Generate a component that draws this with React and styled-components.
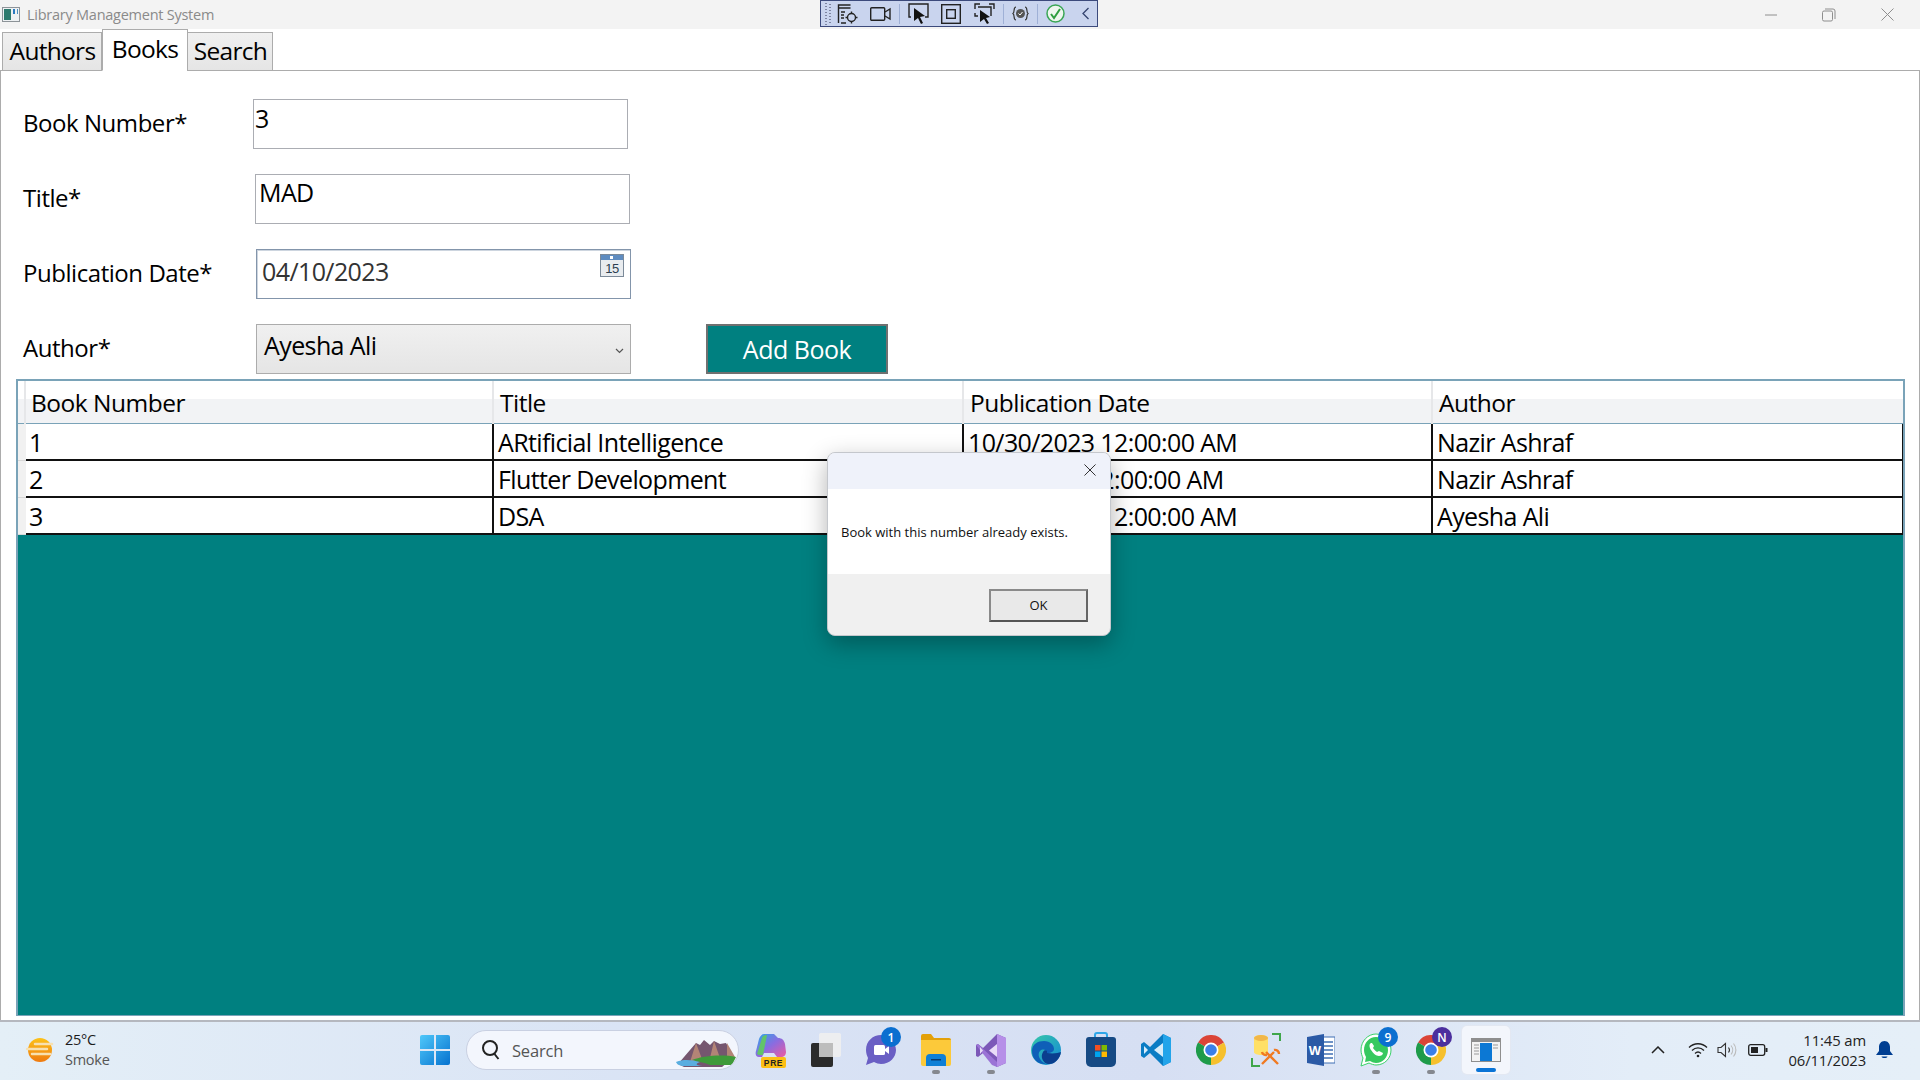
import React from "react";
import styled, { createGlobalStyle } from "styled-components";

const Global = createGlobalStyle`
  html, body { margin: 0; padding: 0; background: #fff; }
  * { box-sizing: border-box; }
  body { font-family: "Open Sans", "Noto Sans", sans-serif; color: #000; }
`;

const Page = styled.div`
  position: relative; width: 1920px; height: 1080px; overflow: hidden;
  display: flex; flex-direction: column;
`;
const TitleBar = styled.div`
  height: 29px; flex: none; background: #f3f3f3; display: flex; align-items: center; padding-left: 2px;
`;
const AppTitle = styled.span`
  margin-left: 7px; font-size: 14.5px; letter-spacing: -0.25px; color: #8a8a8a; white-space: nowrap;
`;
const WindowControls = styled.div`
  margin-left: auto; display: flex; align-items: center; height: 29px; padding-right: 3px;
`;
const WinBtn = styled.div`
  width: 58.5px; height: 29px; display: flex; align-items: center; justify-content: center;
`;
const DebugBar = styled.div`
  position: absolute; left: 820px; top: 0; width: 278px; height: 27px;
  background: #c9d4ee; border: 1px solid #3c4a7c;
  display: flex; align-items: center;
`;
const TabStrip = styled.div`
  height: 42px; flex: none; display: flex; align-items: flex-end; padding-left: 3px; position: relative; z-index: 1; margin-bottom: -1px;
`;
const Tab = styled.div`
  width: ${p => p.$w}px; height: ${p => (p.$active ? 42 : 39)}px;
  border: 1px solid #acacac; ${p => (p.$active ? "border-bottom-color:#fff;" : "")}
  margin-left: ${p => (p.$active ? 0 : -1)}px;
  background: ${p => (p.$active ? "#fff" : "linear-gradient(#f0f0f0,#e5e5e5)")};
  font-size: 24.5px; letter-spacing: -0.7px; line-height: ${p => (p.$active ? 31 : 30)}px; padding-top: 3px;
  padding-left: ${p => (p.$active ? 0 : 1)}px;
  text-align: center; white-space: nowrap;
`;
const Panel = styled.div`
  flex: 1; border-top: 1px solid #acacac; border-left: 1px solid #acacac; border-right: 1px solid #acacac;
  padding-top: 28px; display: flex; flex-direction: column; min-height: 0;
  background: #fff;
`;
const Form = styled.div`
  display: flex; flex-direction: column; gap: 25px; padding-left: 22px;
`;
const Row = styled.div`
  display: flex; align-items: center; height: 50px;
`;
const Label = styled.div`
  width: ${p => p.$w}px; flex: none; font-size: 24px; letter-spacing: -0.45px; white-space: nowrap; padding-bottom: 3px;
`;
const Field = styled.div`
  width: 375px; height: 50px; border: 1px solid ${p => p.$border || "#abadb3"};
  padding: ${p => p.$top || 0}px ${p => p.$pad}px 0; font-size: 25px; letter-spacing: -0.6px; line-height: 34px;
  background: ${p => p.$bg || "#fff"}; color: ${p => p.$color || "#000"};
  display: flex; justify-content: space-between; white-space: nowrap;
  ${p => (p.$thick ? "box-shadow: inset 1px 1px 0 #cdd5df;" : "")}
`;
const Chevron = styled.span`
  align-self: center; margin: 0 -1px 0 0; display: flex;
`;
const AddButton = styled.div`
  width: 182px; height: 50px; margin-left: 75px; background: #008080; border: 2px solid #707070; color: #fff;
  font-size: 25px; letter-spacing: -0.5px; display: flex; align-items: center; justify-content: center;
`;
const Table = styled.div`
  margin: 5px 14px 4px 15px; flex: 1; border: 2px solid #7aa3b8; border-bottom: 1px solid #7aa3b8; border-right-width: 2px;
  background: #008080; display: flex; flex-direction: column; min-height: 0;
`;
const HeaderRow = styled.div`
  height: 43px; flex: none; display: grid; grid-template-columns: 8px 468px 470px 469px 1fr;
  background: linear-gradient(#fff 0, #fff 18px, #f2f3f5 18px, #f2f3f5 100%);
  border-bottom: 1px solid #7aa3b8;
`;
const HeaderCell = styled.div`
  font-size: 24.5px; letter-spacing: -0.5px; padding-left: ${p => p.$pad}px; line-height: 43px; white-space: nowrap;
  border-right: 2px solid #e6e7e9;
  &:last-child { border-right: 0; }
`;
const BodyRow = styled.div`
  height: 37px; flex: none; display: grid; grid-template-columns: 8px 468px 470px 469px 1fr;
`;
const Gutter = styled.div`
  background: #f1f1f1; border-bottom: 1px solid #d8d8d8;
`;
const Cell = styled.div`
  background: #fff; border-right: 2px solid #111; border-bottom: 2px solid #111;
  font-size: 25px; letter-spacing: -0.62px; padding-left: ${p => p.$pad}px; line-height: 37px; white-space: nowrap; overflow: hidden;
  &:last-child { border-right: 1px solid #111; }
`;
const Dialog = styled.div`
  position: absolute; left: 827px; top: 452px; width: 284px; height: 184px; border-radius: 8px; overflow: hidden;
  background: #f0f0f0; border: 1px solid #c4c7cc; box-shadow: 0 8px 24px rgba(0,0,0,.3);
  display: flex; flex-direction: column;
`;
const DialogHead = styled.div`
  height: 36px; flex: none; background: #eff2fa; display: flex; justify-content: flex-end; align-items: center; padding: 0 14px 2px 0;
`;
const DialogBody = styled.div`
  height: 85px; flex: none; background: #fff; font-size: 13px; display: flex; align-items: center; padding: 1px 0 0 13px; color: #111; white-space: nowrap;
`;
const DialogFoot = styled.div`
  flex: 1; display: flex; justify-content: flex-end; align-items: flex-start; padding: 15px 22px 0 0;
`;
const OkButton = styled.div`
  width: 99px; height: 33px; background: #e9e9e9; border: 2px solid #8a8a8a; border-bottom-color: #555; border-right-color: #666;
  font-size: 13px; padding-bottom: 2px; display: flex; align-items: center; justify-content: center; color: #111;
`;
const TaskBar = styled.div`
  height: 60px; flex: none; border-top: 2px solid #b5b8bf; padding-bottom: 2px; display: flex; align-items: center;
  background: linear-gradient(90deg, #e4eff7 0%, #d9e3f5 35%, #d6dff3 60%, #e3edf8 85%, #e5eff8 100%);
  position: relative;
`;
const Weather = styled.div`
  width: 407px; flex: none; display: flex; align-items: center; padding-left: 26px; gap: 11px;
`;
const WeatherText = styled.div`
  font-size: 14.5px; letter-spacing: -0.25px; line-height: 20px; color: #1b1b1b;
  & > div + div { color: #555; }
`;
const Slot = styled.div`
  position: relative; width: ${p => p.$w || 55}px; height: 56px; flex: none; display: flex; align-items: center; justify-content: center;
  ${p => p.$running ? `&::after { content:""; position:absolute; left:50%; margin-left:-4px; bottom:4px; width:8px; height:4px; border-radius:2px; background:#85888f; }` : ""}
`;
const Active = styled.div`
  position: relative; width: 48px; height: 48px; background: #f3f6fc; border-radius: 5px; display: flex; align-items: center; justify-content: center;
  box-shadow: 0 0 0 1px #e3e8f2;
  &::after { content:""; position:absolute; left:14px; bottom:2px; width:20px; height:4px; border-radius:2px; background:#0a74d6; }
`;
const SearchPill = styled.div`
  width: 273px; height: 40px; margin: 0 4px 0 4px; flex: none; border-radius: 20px; background: #f3f6fd; border: 1px solid #c9d0e2;
  display: flex; align-items: center; padding-left: 14px; gap: 11px; font-size: 16.5px; color: #555; position: relative; overflow: hidden;
  letter-spacing: -0.2px;
`;
const Scene = styled.span`
  position: absolute; right: 0; bottom: 2px; display: flex;
`;
const Badge = styled.div`
  position: absolute; right: ${p => p.$r}px; top: ${p => p.$t}px; width: 20px; height: 20px; border-radius: 50%;
  background: ${p => p.$bg}; color: #fff; font-size: 12px; font-weight: 600; display: flex; align-items: center; justify-content: center;
`;
const Tray = styled.div`
  margin-left: auto; display: flex; align-items: center; height: 56px; padding-right: 27px;
`;
const TrayIcon = styled.div`
  width: ${p => p.$w}px; margin-left: ${p => p.$ml || 0}px; display: flex; justify-content: center; flex: none;
`;
const Clock = styled.div`
  width: 88px; text-align: right; font-size: 14.8px; line-height: 20px; color: #222; margin-left: 3px; margin-right: 10px;
  letter-spacing: -0.1px; white-space: nowrap;
`;
const Sep = styled.span`
  width: 1px; height: 20px; background: #9fb0d6; flex: none; margin: 0 ${p => p.$m || 0}px;
`;
const BarIcon = styled.span`
  display: flex; flex: none; margin-left: ${p => p.$ml || 0}px;
`;

/* icons */
const AppGlyph = () => (
  <svg width="18" height="15" viewBox="0 0 18 15"><rect x=".5" y=".5" width="17" height="14" fill="#eef1f3" stroke="#8d9398"/><rect x="2" y="2" width="7" height="11" fill="#2e7b6e"/><rect x="11" y="2" width="2" height="5" fill="#2a7ac0"/><rect x="15" y="2" width="1" height="5" fill="#4a90c0"/></svg>
);
const Min = () => <svg width="14" height="14"><path d="M1 7h12" stroke="#8e8e8e"/></svg>;
const Restore = () => <svg width="14" height="14" fill="none" stroke="#8e8e8e"><rect x=".5" y="3" width="10" height="10" rx="1.5"/><path d="M3 1h8a2 2 0 0 1 2 2v8"/></svg>;
const CloseX = ({ c = "#8e8e8e", s = 13 }) => <svg width={s} height={s} viewBox="0 0 13 13"><path d="M.5.5l12 12M12.5.5l-12 12" stroke={c} fill="none"/></svg>;
const Calendar = () => (
  <svg width="24" height="23" viewBox="0 0 24 23" style={{ marginTop: 0, marginRight: 1 }}>
    <rect x=".5" y=".5" width="23" height="22" fill="#e9ecef" stroke="#7c8a99"/><rect x="1" y="1" width="22" height="5" fill="#5f8cc0"/><rect x="10" y="2" width="3" height="3" fill="#fff"/>
    <text x="12" y="19" textAnchor="middle" fontSize="13" fontFamily="Liberation Sans" fill="#2c3e50">15</text>
  </svg>
);
const Grip = () => <svg width="8" height="23" style={{ marginLeft: 3 }}>{[...Array(8)].map((_, i) => <g key={i}><rect x="1" y={1 + i * 3} width="2" height="1" fill="#7d84a0"/><rect x="5" y={2 + i * 3} width="2" height="1" fill="#7d84a0"/></g>)}</svg>;
const TbConfig = () => <svg width="22" height="22" viewBox="0 0 22 22" fill="none" stroke="#222" strokeWidth="1.4"><path d="M1.5 20V2h12M1.5 5h12" /><path d="M4 9h4M4 12h3M4 15h3M4 20h5"/><circle cx="14.5" cy="14.5" r="4"/><path d="M14.5 8.5v2M14.5 18.5v2M8.5 14.5h2M18.5 14.5h2"/></svg>;
const TbCam = () => <svg width="21" height="14" viewBox="0 0 21 14" fill="none" stroke="#222" strokeWidth="1.4"><rect x=".7" y=".7" width="14" height="12.6" rx="1"/><path d="M15 5l5-3v10l-5-3"/></svg>;
const TbSelect = () => <svg width="21" height="21" viewBox="0 0 21 21"><path d="M3 14H1V1h19v13h-3" fill="none" stroke="#222" strokeWidth="1.4"/><path d="M6 5l11 8-5 1 3 6-2 1-3-6-4 3z" fill="#111"/></svg>;
const TbFrame = () => <svg width="20" height="20" viewBox="0 0 20 20" fill="none" stroke="#222" strokeWidth="1.4"><rect x=".7" y=".7" width="18.6" height="18.6"/><rect x="5.7" y="5.7" width="8.6" height="8.6"/></svg>;
const TbDisplay = () => <svg width="21" height="21" viewBox="0 0 21 21"><path d="M1 6V1h5M15 1h5v5M1 10v3h3M4 4h13v9" fill="none" stroke="#222" strokeWidth="1.4"/><path d="M6 7l10 7-4 1 3 5-2 1-3-5-4 3z" fill="#111"/></svg>;
const TbBind = () => <svg width="17" height="15" viewBox="0 0 17 15"><path d="M4 1C1 1 3 6 1 7.500 3 9 1 14 4 14M13 1c3 0 1 5 3 6.500-2 1.500 0 6.500-3 6.500" fill="none" stroke="#333" strokeWidth="1.2"/><circle cx="8.500" cy="7.500" r="4.500" fill="#555"/><path d="M6.500 7.500l1.500 1.500 2.500-3" stroke="#fff" fill="none"/></svg>;
const TbCheck = () => <svg width="19" height="19" viewBox="0 0 19 19"><circle cx="9.500" cy="9.500" r="8.500" fill="#eef6ee" stroke="#3aa655" strokeWidth="1.500"/><path d="M5 10l3 4 6-9" stroke="#2f9e3f" strokeWidth="2" fill="none"/></svg>;
const TbBack = () => <svg width="9" height="13" viewBox="0 0 9 13"><path d="M7.500 1L2 6.500 7.500 12" stroke="#34446f" strokeWidth="1.300" fill="none"/></svg>;
const SelectChevron = () => <svg width="9" height="6" viewBox="0 0 9 6"><path d="M1 1l3.500 3.500L8 1" stroke="#555" strokeWidth="1.200" fill="none"/></svg>;

const Sun = () => (
  <svg width="28" height="26" viewBox="0 0 28 26">
    <defs><linearGradient id="sn" x1="0" y1="0" x2="0" y2="1"><stop offset="0" stopColor="#fcc21a"/><stop offset="1" stopColor="#ef7a10"/></linearGradient></defs>
    <circle cx="14" cy="13" r="12" fill="url(#sn)"/>
    <path d="M9 7h17M1 12h20M6 17h18" stroke="#f7e0b0" strokeWidth="2.500" strokeLinecap="round"/>
  </svg>
);
const StartIcon = () => (
  <svg width="30" height="30" viewBox="0 0 30 30">
    <defs><linearGradient id="ws" x1="0" y1="0" x2="1" y2="1"><stop offset="0" stopColor="#4fc8fa"/><stop offset="1" stopColor="#0672cf"/></linearGradient></defs>
    <path d="M0 2a2 2 0 0 1 2-2h12v14H0zM16 0h12a2 2 0 0 1 2 2v12H16zM0 16h14v14H2a2 2 0 0 1-2-2zM16 16h14v12a2 2 0 0 1-2 2H16z" fill="url(#ws)"/>
  </svg>
);
const Mag = () => <svg width="20" height="22" viewBox="0 0 20 22" fill="none" stroke="#222" strokeWidth="2"><circle cx="9" cy="9" r="7"/><path d="M13.500 15l4 5"/></svg>;
const Landscape = () => (
  <svg width="64" height="29" viewBox="0 0 64 29">
    <path d="M4 26L22 5l4 2 4-5 6 5 4-4 6 3 6-1 8 14-12 10H10z" fill="#75566f"/>
    <path d="M22 5l6 16-12 3zM40 3l6 17h-10zM53 5l8 14-8 1z" fill="#b38476"/>
    <path d="M18 22c10-4 30-6 44-3l-4 8H36c-6-3-12-3-18-5z" fill="#3f9a3a"/>
    <path d="M2 24c8-3 16-2 24 0-6 2-4 4 6 4H8c-4-1-5-2-6-4z" fill="#5aaee0"/>
  </svg>
);
const Copilot = () => (
  <svg width="32" height="36" viewBox="0 0 32 36">
    <defs><linearGradient id="cp" x1="0" y1="0" x2="1" y2="1"><stop offset="0" stopColor="#2aa8e8"/><stop offset=".5" stopColor="#8a6ce0"/><stop offset="1" stopColor="#ee5aa0"/></linearGradient></defs>
    <path d="M9 2h10l4 4c4 0 6 2 7 6l1 8c0 3-2 5-5 5h-4l-3-4H9l-2 4H4c-3 0-4-3-3-6l3-12C5 4 7 2 9 2z" fill="url(#cp)"/>
    <path d="M2 22L7 6c1-3 4-3 5-3l-4 20H4z" fill="#62c46a"/>
    <rect x="6" y="25" width="25" height="11" rx="2" fill="#fcbf14"/>
    <text x="18.500" y="34" textAnchor="middle" fontSize="8.500" fontWeight="700" fontFamily="Liberation Sans" fill="#222" letterSpacing=".6">PRE</text>
  </svg>
);
const TaskView = () => (
  <svg width="30" height="34" viewBox="0 0 30 34">
    <rect x="0" y="10" width="22" height="24" rx="2" fill="#2b2b2b"/>
    <rect x="8" y="0" width="22" height="24" rx="2" fill="#f0f0f0" opacity=".9"/>
    <rect x="8" y="10" width="14" height="14" fill="#bdbdbd"/>
  </svg>
);
const Teams = () => (
  <svg width="32" height="32" viewBox="0 0 32 32">
    <path d="M16 1C8 1 1 7 1 16c0 3 1 6 2 8l-2 7 8-3c2 1 5 2 7 2 9 0 15-7 15-14S24 1 16 1z" fill="#6a5fc4"/>
    <rect x="9" y="11" width="11" height="10" rx="1.500" fill="#fff"/><path d="M20 15l4-3v8l-4-3z" fill="#fff"/>
  </svg>
);
const Folder = () => (
  <svg width="30" height="32" viewBox="0 0 30 32">
    <path d="M0 2a2 2 0 0 1 2-2h8l3 4h15a2 2 0 0 1 2 2v6H0z" fill="#e3a008"/>
    <path d="M0 6h30v24a2 2 0 0 1-2 2H2a2 2 0 0 1-2-2z" fill="#fcc93a"/>
    <path d="M5 24a4 4 0 0 1 4-4h12a4 4 0 0 1 4 4v8H5z" fill="#0f7fd6"/><rect x="10" y="25" width="10" height="1.500" fill="#083a70"/>
  </svg>
);
const VS = () => (
  <svg width="30" height="33" viewBox="0 0 30 33">
    <path d="M21 0l9 4v25l-9 4L7 19 2 23l-2-1V11l2-1 5 4z" fill="#7c58b8"/>
    <path d="M21 0l9 4v25l-9 4z" fill="#b68fe8"/>
    <path d="M0 11l2-1 19 18v5l-5-2z" fill="#9b74d6"/>
    <path d="M4 13v7l3-3.500z M21 10l-8 6.500 8 6.500z" fill="#e9dcf7"/>
  </svg>
);
const Edge = () => (
  <svg width="30" height="30" viewBox="0 0 30 30">
    <defs><linearGradient id="eg" x1="0" y1="0" x2="1" y2="1"><stop offset="0" stopColor="#36c8a8"/><stop offset="1" stopColor="#1488d8"/></linearGradient></defs>
    <circle cx="15" cy="15" r="15" fill="url(#eg)"/>
    <path d="M1 16C1 9 7 6 13 6c6 0 10 4 10 8 0 2-2 4-7 4 0-3-4-5-7-2-3 3-1 10 6 13-8 1-14-5-14-13z" fill="#0f5fb8"/>
    <path d="M16 18c7 1 11 0 14-1-1 7-7 13-13 12-5-1-8-7-5-12 1-2 3-2 4-1z" fill="#0b3f8e"/>
  </svg>
);
const Store = () => (
  <svg width="30" height="36" viewBox="0 0 30 36">
    <path d="M9 6V3a2 2 0 0 1 2-2h8a2 2 0 0 1 2 2v3" fill="none" stroke="#2ea6e8" strokeWidth="2"/>
    <path d="M0 8a3 3 0 0 1 3-3h24a3 3 0 0 1 3 3v22a5 5 0 0 1-5 5H5a5 5 0 0 1-5-5z" fill="#164a84"/>
    <rect x="9" y="13" width="5.500" height="5.500" fill="#f25022"/><rect x="15.500" y="13" width="5.500" height="5.500" fill="#7fba00"/>
    <rect x="9" y="19.500" width="5.500" height="5.500" fill="#00a4ef"/><rect x="15.500" y="19.500" width="5.500" height="5.500" fill="#ffb900"/>
  </svg>
);
const VSCode = () => (
  <svg width="32" height="32" viewBox="0 0 32 32">
    <path d="M23 0l8 4v24l-8 4-13-13-6 5-3-2V10l3-2 6 5z" fill="#0a7cc4"/>
    <path d="M23 0l8 4v24l-8 4z" fill="#22a4ea"/>
    <path d="M23 9l-9 7 9 7z" fill="#d7ecfa"/>
    <path d="M4 12v8l4-4z" fill="#d7ecfa"/>
  </svg>
);
const Chrome = ({ s = 30 }) => (
  <svg width={s} height={s} viewBox="0 0 30 30">
    <path d="M15 15L2 7.500A15 15 0 0 1 28 7.500z" fill="#db4437"/>
    <path d="M15 15L28 7.500A15 15 0 0 1 15 30z" fill="#f6c02d"/>
    <path d="M15 15L15 30A15 15 0 0 1 2 7.500z" fill="#1e9b4a"/>
    <circle cx="15" cy="15" r="7.500" fill="#fff"/><circle cx="15" cy="15" r="5.800" fill="#3b7fe8"/>
  </svg>
);
const DbTool = () => (
  <svg width="30" height="34" viewBox="0 0 30 34">
    <path d="M21 1h8v7M1 25v8h8" fill="none" stroke="#3fa64a" strokeWidth="2"/>
    <path d="M3 5c0-4 14-4 14 0v14c0 4-14 4-14 0z" fill="#ffe066"/><ellipse cx="10" cy="5" rx="7" ry="3" fill="#f1b74a"/>
    <path d="M11 31l12-12M27 31L15 19M11 19a4 4 0 0 0 5 3M23 17a4 4 0 0 1 5 4" stroke="#f07a22" strokeWidth="2.400" fill="none"/>
  </svg>
);
const Word = () => (
  <svg width="28" height="32" viewBox="0 0 28 32">
    <rect x="8" y="3" width="20" height="26" fill="#fff" stroke="#3f6fb4"/>
    <path d="M17 8h9M17 12h9M17 16h9M17 20h9M17 24h9" stroke="#3f6fb4" strokeWidth="1.500"/>
    <path d="M0 3l17-3v32L0 29z" fill="#2b5aa6"/>
    <text x="8" y="21" textAnchor="middle" fontSize="13" fontWeight="700" fontFamily="Liberation Sans" fill="#fff">W</text>
  </svg>
);
const WhatsApp = () => (
  <svg width="32" height="34" viewBox="0 0 32 34">
    <path d="M16 1C8 1 1 8 1 17c0 3 1 6 2 8L1 33l8-3c2 1 5 2 7 2 9 0 15-7 15-15S25 1 16 1z" fill="#fff" stroke="#3ad16a" strokeWidth="1"/>
    <path d="M16 4C9 4 4 10 4 17c0 3 1 5 2 7l-1 5 5-1c2 1 4 2 6 2 7 0 12-6 12-13S23 4 16 4z" fill="#36c95f"/>
    <path d="M11 10c-2 1-2 4 0 7 2 3 5 6 8 6 2 0 4-1 4-3l-4-2-2 1c-2-1-3-3-4-4l1-2-2-3z" fill="#fff"/>
  </svg>
);
const MiniApp = () => (
  <svg width="30" height="24" viewBox="0 0 30 24">
    <rect x=".5" y=".5" width="29" height="23" fill="#f3f3f3" stroke="#8e8e8e"/><rect x="1" y="1" width="28" height="3" fill="#8e8e8e"/>
    <path d="M3 7h5M3 10h5M3 13h5M3 16h5M22 7h5M22 10h5" stroke="#999" strokeWidth="1.200"/>
    <rect x="9" y="5" width="12" height="18" fill="#0c78d4"/>
  </svg>
);
const UpChevron = () => <svg width="14" height="8" viewBox="0 0 14 8"><path d="M1 7l6-6 6 6" stroke="#222" strokeWidth="1.500" fill="none"/></svg>;
const Wifi = () => <svg width="20" height="16" viewBox="0 0 20 16" fill="none" stroke="#222" strokeWidth="1.300"><path d="M1 5.500c5-5 13-5 18 0M4 8.500c3.500-3.500 8.500-3.500 12 0M7 11.500c1.800-1.800 4.200-1.800 6 0"/><circle cx="10" cy="14" r="1.300" fill="#222" stroke="none"/></svg>;
const Volume = () => <svg width="20" height="16" viewBox="0 0 20 16" fill="none" stroke="#333" strokeWidth="1.100"><path d="M1 5.500h3L8.500 1.500v13L4 10.500H1z"/><path d="M11.500 5.500a4 4 0 0 1 0 5" /><path d="M14 3.500a7 7 0 0 1 0 9M16.500 1.500a10 10 0 0 1 0 13" stroke="#bbb"/></svg>;
const Battery = () => <svg width="20" height="12" viewBox="0 0 20 12"><rect x=".7" y=".7" width="16" height="10.600" rx="2" fill="none" stroke="#222" strokeWidth="1.300"/><rect x="3" y="3" width="7" height="6" fill="#222"/><rect x="17.500" y="4" width="2" height="4" fill="#222"/></svg>;
const Bell = () => <svg width="17" height="18" viewBox="0 0 17 18" fill="#003e92"><path d="M8.500 0C5 0 3 3 3 6v4l-3 4h17l-3-4V6c0-3-2-6-5.500-6z"/><path d="M5.500 15.500h6c-.5 2-5.500 2-6 0z"/></svg>;

const rows = [
  ["1", "ARtificial Intelligence", "10/30/2023 12:00:00 AM", "Nazir Ashraf"],
  ["2", "Flutter Development", "10/3/2023 12:00:00 AM", "Nazir Ashraf"],
  ["3", "DSA", "10/30/2023 12:00:00 AM", "Ayesha Ali"],
];

export default function App() {
  return (
    <Page>
      <Global />
      <TitleBar>
        <AppGlyph />
        <AppTitle>Library Management System</AppTitle>
        <WindowControls>
          <WinBtn><Min /></WinBtn>
          <WinBtn><Restore /></WinBtn>
          <WinBtn><CloseX /></WinBtn>
        </WindowControls>
      </TitleBar>
      <TabStrip>
        <Tab $w={100}>Authors</Tab>
        <Tab $w={86} $active>Books</Tab>
        <Tab $w={86}>Search</Tab>
      </TabStrip>
      <Panel>
        <Form>
          <Row>
            <Label $w={230}>Book Number*</Label>
            <Field $pad={1} $top={1}>3</Field>
          </Row>
          <Row>
            <Label $w={232}>Title*</Label>
            <Field $pad={3} $top={0}>MAD</Field>
          </Row>
          <Row>
            <Label $w={233}>Publication Date*</Label>
            <Field $pad={5} $top={4} $border="#8395ab" $thick $color="#333">04/10/2023<Calendar /></Field>
          </Row>
          <Row>
            <Label $w={233}>Author*</Label>
            <Field $pad={7} $top={3} $border="#acacac" $bg="linear-gradient(#f0f0f0,#e5e5e5)">Ayesha Ali<Chevron><SelectChevron /></Chevron></Field>
            <AddButton>Add Book</AddButton>
          </Row>
        </Form>
        <Table>
          <HeaderRow>
            <HeaderCell />
            <HeaderCell $pad={5}>Book Number</HeaderCell>
            <HeaderCell $pad={6}>Title</HeaderCell>
            <HeaderCell $pad={6}>Publication Date</HeaderCell>
            <HeaderCell $pad={6}>Author</HeaderCell>
          </HeaderRow>
          {rows.map(r => (
            <BodyRow key={r[0]}>
              <Gutter />
              {r.map((c, i) => <Cell key={i} $pad={i === 0 ? 3 : 4}>{c}</Cell>)}
            </BodyRow>
          ))}
        </Table>
      </Panel>
      <TaskBar>
        <Weather>
          <Sun />
          <WeatherText><div>25°C</div><div>Smoke</div></WeatherText>
        </Weather>
        <Slot><StartIcon /></Slot>
        <SearchPill><Mag />Search<Scene><Landscape /></Scene></SearchPill>
        <Slot><Copilot /></Slot>
        <Slot><TaskView /></Slot>
        <Slot><Teams /><Badge $r={7} $t={5} $bg="#0b6fd0">1</Badge></Slot>
        <Slot $running><Folder /></Slot>
        <Slot $running><VS /></Slot>
        <Slot><Edge /></Slot>
        <Slot><Store /></Slot>
        <Slot><VSCode /></Slot>
        <Slot><Chrome /></Slot>
        <Slot><DbTool /></Slot>
        <Slot><Word /></Slot>
        <Slot $running><WhatsApp /><Badge $r={5} $t={5} $bg="#0b6fd0">9</Badge></Slot>
        <Slot $running><Chrome /><Badge $r={6} $t={5} $bg="#4b2f9e">N</Badge></Slot>
        <Slot><Active><MiniApp /></Active></Slot>
        <Tray>
          <TrayIcon $w={28}><UpChevron /></TrayIcon>
          <TrayIcon $w={30} $ml={11}><Wifi /></TrayIcon>
          <TrayIcon $w={28}><Volume /></TrayIcon>
          <TrayIcon $w={34}><Battery /></TrayIcon>
          <Clock><div>11:45 am</div><div>06/11/2023</div></Clock>
          <Bell />
        </Tray>
      </TaskBar>
      <DebugBar>
        <Grip />
        <BarIcon $ml={5}><TbConfig /></BarIcon>
        <BarIcon $ml={11}><TbCam /></BarIcon>
        <Sep $m={8} />
        <BarIcon><TbSelect /></BarIcon>
        <BarIcon $ml={12}><TbFrame /></BarIcon>
        <BarIcon $ml={13}><TbDisplay /></BarIcon>
        <Sep $m={8} />
        <BarIcon><TbBind /></BarIcon>
        <Sep $m={8} />
        <BarIcon><TbCheck /></BarIcon>
        <BarIcon $ml={16}><TbBack /></BarIcon>
      </DebugBar>
      <Dialog>
        <DialogHead><CloseX c="#222" s={12} /></DialogHead>
        <DialogBody>Book with this number already exists.</DialogBody>
        <DialogFoot><OkButton>OK</OkButton></DialogFoot>
      </Dialog>
    </Page>
  );
}
